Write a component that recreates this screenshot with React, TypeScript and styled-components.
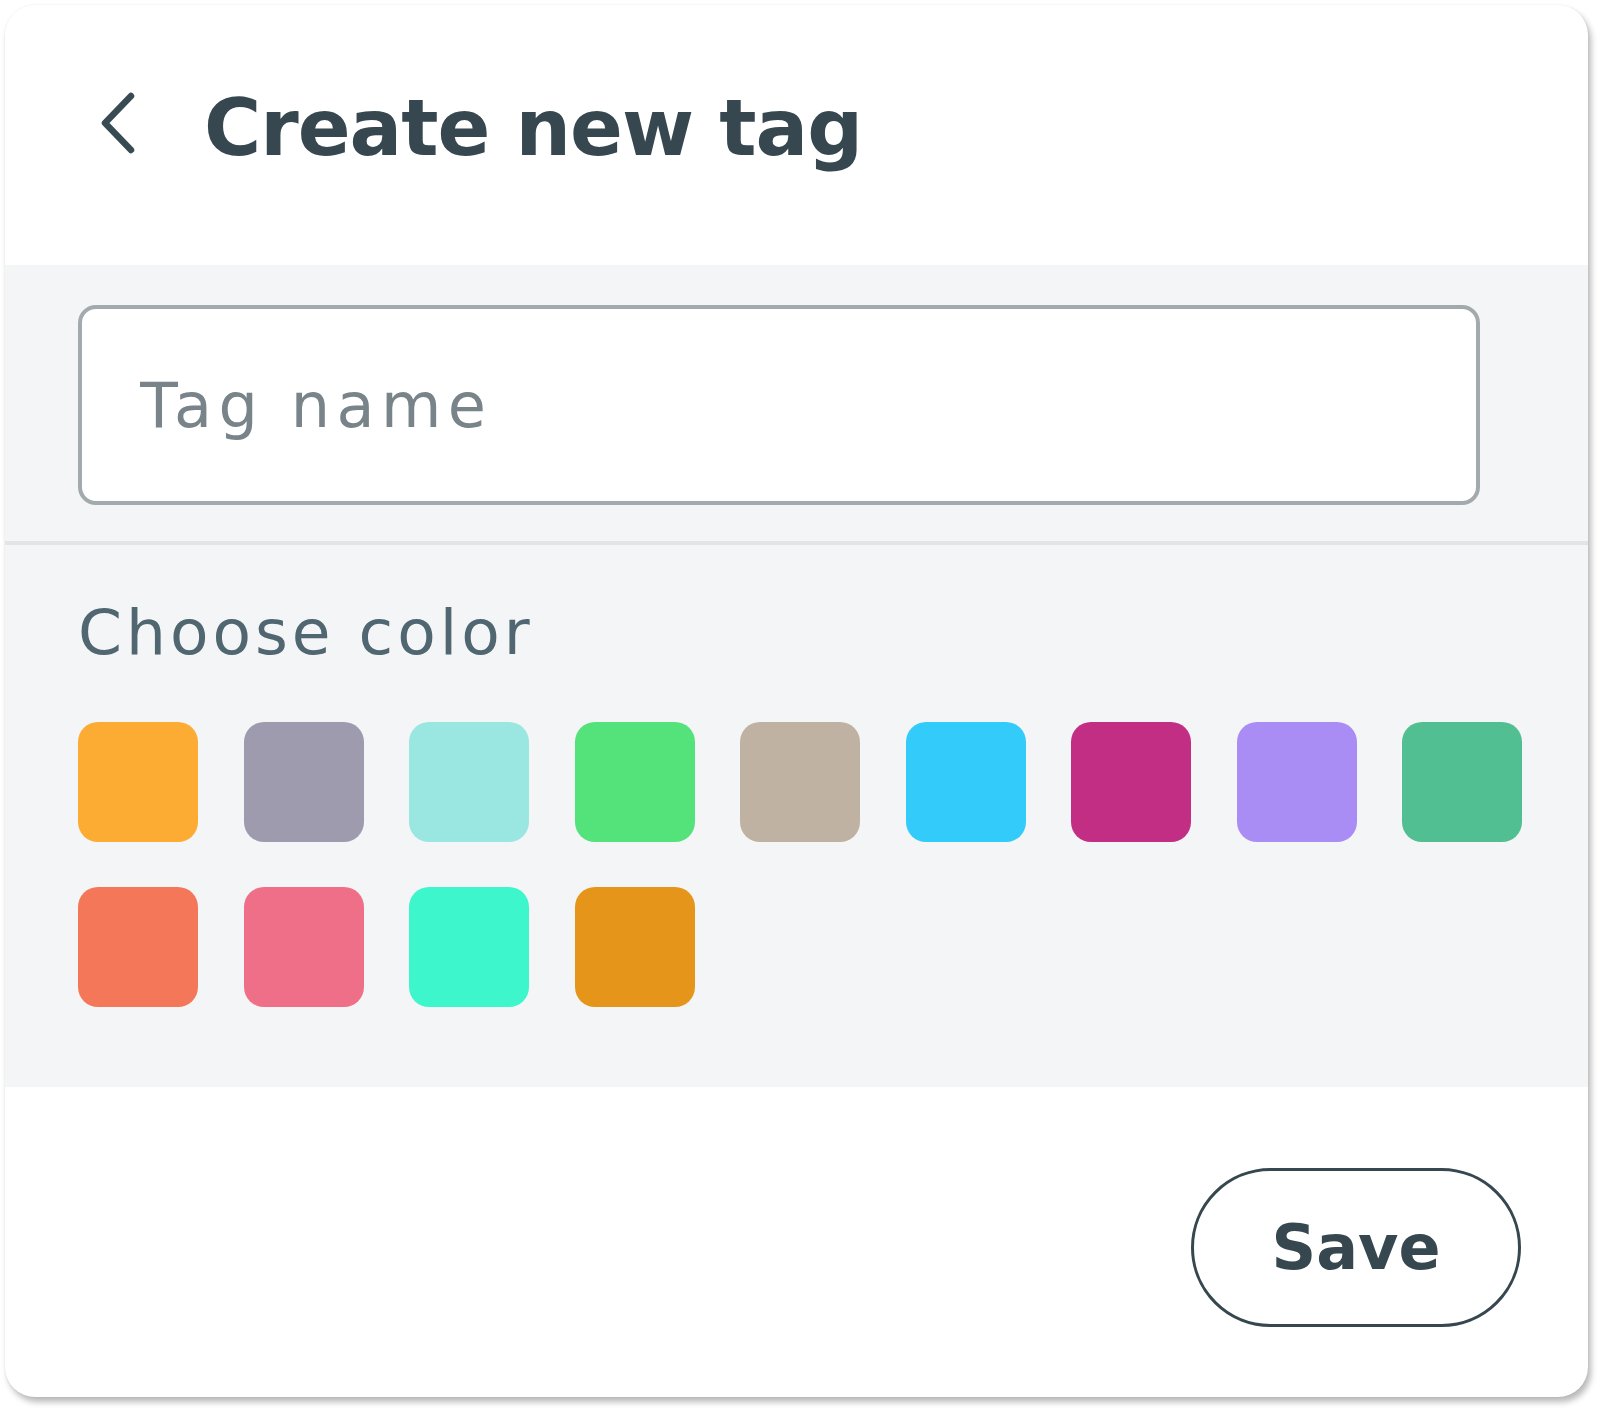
import styled, { createGlobalStyle } from "styled-components";

const GlobalStyle = createGlobalStyle`
  html, body {
    margin: 0;
    padding: 0;
    background: #ffffff;
    font-family: "DejaVu Sans", "Open Sans", sans-serif;
  }
`;

const swatches = [
  "#fcac33",
  "#9e9baf",
  "#9ae6e0",
  "#54e27b",
  "#bfb2a2",
  "#33cbf9",
  "#c12e84",
  "#a98df5",
  "#52bf92",
  "#f5775a",
  "#ef6f88",
  "#3ef6cb",
  "#e5961a",
];

const BackIcon = () => (
  <svg width="40" height="64" viewBox="0 0 40 64" fill="none">
    <path
      d="M34 4 L8 31 L34 58"
      stroke="#384a52"
      strokeWidth="6.5"
      strokeLinecap="round"
      strokeLinejoin="round"
    />
  </svg>
);

const App = () => {
  return (
    <>
      <GlobalStyle />
      <Page>
        <Card>
          <Header>
            <BackButton type="button" aria-label="Back">
              <BackIcon />
            </BackButton>
            <Title>Create new tag</Title>
          </Header>
          <Body>
            <InputSection>
              <NameInput placeholder="Tag name" />
            </InputSection>
            <ColorSection>
              <Label>Choose color</Label>
              <Swatches>
                {swatches.map((c) => (
                  <Swatch key={c} type="button" $color={c} />
                ))}
              </Swatches>
            </ColorSection>
          </Body>
          <Footer>
            <SaveButton type="button">Save</SaveButton>
          </Footer>
        </Card>
      </Page>
    </>
  );
};

export default App;

const Page = styled.div`
  width: 1600px;
  height: 1411px;
  padding: 5px 0 0 5px;
  box-sizing: border-box;
`;

const Card = styled.div`
  width: 1583px;
  height: 1392px;
  background: #ffffff;
  border-radius: 30px;
  overflow: hidden;
  box-shadow: 3px 5px 6px rgba(0, 0, 0, 0.28), 0 0 2px rgba(0, 0, 0, 0.08);
  display: flex;
  flex-direction: column;
`;

const Header = styled.header`
  height: 260px;
  flex-shrink: 0;
  display: flex;
  align-items: center;
  padding: 0 0 14px 92px;
  box-sizing: border-box;
  gap: 67px;
`;

const BackButton = styled.button`
  border: none;
  background: none;
  padding: 0;
  display: flex;
  cursor: pointer;
  margin-top: -8px;
`;

const Title = styled.h1`
  margin: 0;
  font-size: 78px;
  font-weight: 700;
  color: #37474f;
  letter-spacing: -1px;
`;

const Body = styled.div`
  background: #f4f5f7;
  display: flex;
  flex-direction: column;
  height: 822px;
  flex-shrink: 0;
`;

const InputSection = styled.div`
  padding: 40px 108px 36px 73px;
  border-bottom: 4px solid #e1e5e7;
`;

const NameInput = styled.input`
  display: block;
  width: 100%;
  height: 200px;
  box-sizing: border-box;
  border: 4px solid #a2aaad;
  border-radius: 18px;
  background: #ffffff;
  padding: 0 0 0 58px;
  font-family: "DejaVu Sans", "Open Sans", sans-serif;
  font-size: 62px;
  color: #37474f;
  outline: none;
  &::placeholder {
    color: #78848a;
    letter-spacing: 6.5px;
  }
`;

const ColorSection = styled.div`
  padding: 48px 0 0 73px;
`;

const Label = styled.div`
  font-size: 63px;
  color: #506670;
  letter-spacing: 4px;
  line-height: 80px;
`;

const Swatches = styled.div`
  display: grid;
  grid-template-columns: repeat(9, 120px);
  column-gap: 45.5px;
  row-gap: 45px;
  margin-top: 49px;
`;

const Swatch = styled.button<{ $color: string }>`
  width: 120px;
  height: 120px;
  border: none;
  padding: 0;
  border-radius: 20px;
  background: ${(p) => p.$color};
  cursor: pointer;
`;

const Footer = styled.footer`
  flex: 1;
  display: flex;
  justify-content: flex-end;
  align-items: flex-start;
  padding: 81px 67px 0 0;
`;

const SaveButton = styled.button`
  width: 330px;
  height: 159px;
  border: 3px solid #37474f;
  border-radius: 80px;
  background: #ffffff;
  font-family: "DejaVu Sans", "Open Sans", sans-serif;
  font-size: 62px;
  font-weight: 700;
  color: #37474f;
  letter-spacing: 0px;
  cursor: pointer;
`;
